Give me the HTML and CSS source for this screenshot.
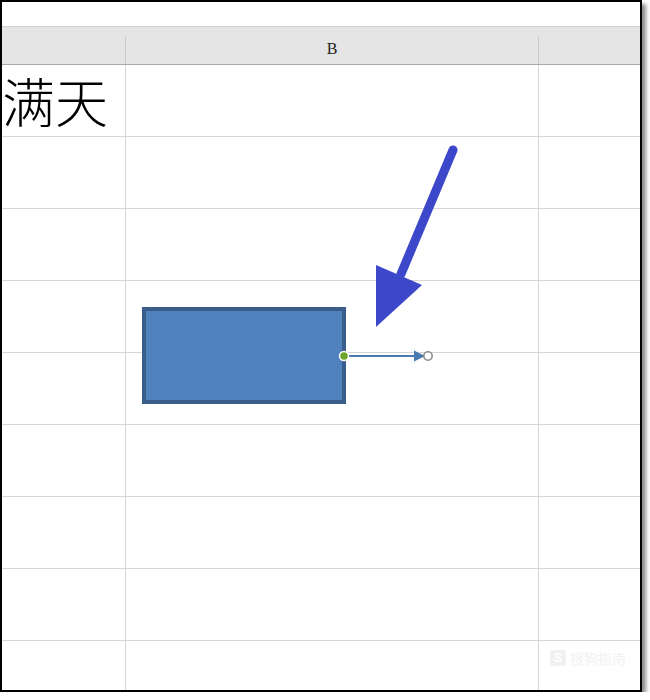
FILE: index.html
```html
<!doctype html>
<html lang="zh-CN">
	<head>
		<meta charset="UTF-8" />
		<title>表格</title>
		<link rel="stylesheet" href="styles.css">
	</head>
	<body>
		<div class="sheet">
			<div class="toolbar"></div>
			<div class="col-header">
				<div class="hcell col-a"></div>
				<div class="hcell col-b">B</div>
				<div class="hcell col-c"></div>
			</div>
			<div class="row">
				<div class="cell col-a big-text">满天</div>
				<div class="cell col-b"></div>
				<div class="cell col-c"></div>
			</div>
			<div class="row"><div class="cell col-a"></div><div class="cell col-b"></div><div class="cell col-c"></div></div>
			<div class="row"><div class="cell col-a"></div><div class="cell col-b"></div><div class="cell col-c"></div></div>
			<div class="row"><div class="cell col-a"></div><div class="cell col-b"></div><div class="cell col-c"></div></div>
			<div class="row"><div class="cell col-a"></div><div class="cell col-b"></div><div class="cell col-c"></div></div>
			<div class="row"><div class="cell col-a"></div><div class="cell col-b"></div><div class="cell col-c"></div></div>
			<div class="row"><div class="cell col-a"></div><div class="cell col-b"></div><div class="cell col-c"></div></div>
			<div class="row"><div class="cell col-a"></div><div class="cell col-b"></div><div class="cell col-c"></div></div>
			<div class="row last"><div class="cell col-a"></div><div class="cell col-b"></div><div class="cell col-c"></div></div>

			<div class="watermark"><span class="wm-logo">S</span>搜狗指南</div>
		</div>

		<!-- shapes drawn on top of the sheet -->
		<svg class="shapes" width="650" height="700" viewBox="0 0 650 700" xmlns="http://www.w3.org/2000/svg">
			<rect x="144" y="309" width="200" height="93" fill="#4f81bd" stroke="#3a5e8c" stroke-width="4" />
			<line x1="344" y1="356" x2="418" y2="356" stroke="#4a78b0" stroke-width="2" />
			<polygon points="414,350.5 425,356 414,361.5" fill="#4a78b0" />
			<circle cx="344" cy="356" r="4.5" fill="#6aa52c" stroke="#ffffff" stroke-width="1.5" />
			<circle cx="428" cy="356" r="4.2" fill="#ffffff" stroke="#8a8a8a" stroke-width="1.6" />
			<line x1="453" y1="150" x2="401" y2="274" stroke="#3d47c9" stroke-width="9" stroke-linecap="round" />
			<polygon points="376,265 422,285 376,327" fill="#3d47c9" />
		</svg>
	</body>
</html>
```
FILE: styles.css
```css
body {
	margin: 0;
	background-color: #ffffff;
	font-family: "Liberation Serif", serif;
}
.sheet {
	position: relative;
	width: 638px;
	height: 688px;
	border: 2px solid #000000;
	box-shadow: 4px 4px 4px rgba(0, 0, 0, 0.45);
	overflow: hidden;
	background-color: #ffffff;
}
.toolbar {
	height: 24px;
	border-bottom: 1px solid #cfcfcf;
}
.col-header {
	display: grid;
	grid-template-columns: 124px 413px 1fr;
	height: 37px;
	background-color: #e5e5e5;
	border-bottom: 1px solid #a8a8a8;
}
.hcell {
	margin-top: 9px;
	border-right: 1px solid #cbcbcb;
	display: flex;
	align-items: center;
	justify-content: center;
	font-size: 16px;
	color: #222222;
	padding-bottom: 2px;
}
.hcell.col-c {
	border-right: none;
}
.row {
	display: grid;
	grid-template-columns: 124px 413px 1fr;
	height: 71px;
	border-bottom: 1px solid #d6d6d6;
}
.row.last {
	border-bottom: none;
}
.cell {
	border-right: 1px solid #d6d6d6;
}
.cell.col-c {
	border-right: none;
}
.big-text {
	font-family: "Noto Sans CJK SC", sans-serif;
	font-size: 53px;
	line-height: 71px;
	color: #000000;
	white-space: nowrap;
	font-weight: 300;
}
.watermark {
	position: absolute;
	right: 14px;
	bottom: 22px;
	display: flex;
	align-items: center;
	gap: 4px;
	font-family: "Noto Sans CJK SC", sans-serif;
	font-size: 14px;
	color: #f1f1f1;
}
.wm-logo {
	display: inline-flex;
	align-items: center;
	justify-content: center;
	width: 16px;
	height: 16px;
	border-radius: 3px;
	background-color: #f1f1f1;
	color: #ffffff;
	font-family: "Liberation Sans", sans-serif;
	font-weight: bold;
	font-size: 12px;
}
.shapes {
	position: absolute;
	top: 0;
	left: 0;
	pointer-events: none;
}
```
